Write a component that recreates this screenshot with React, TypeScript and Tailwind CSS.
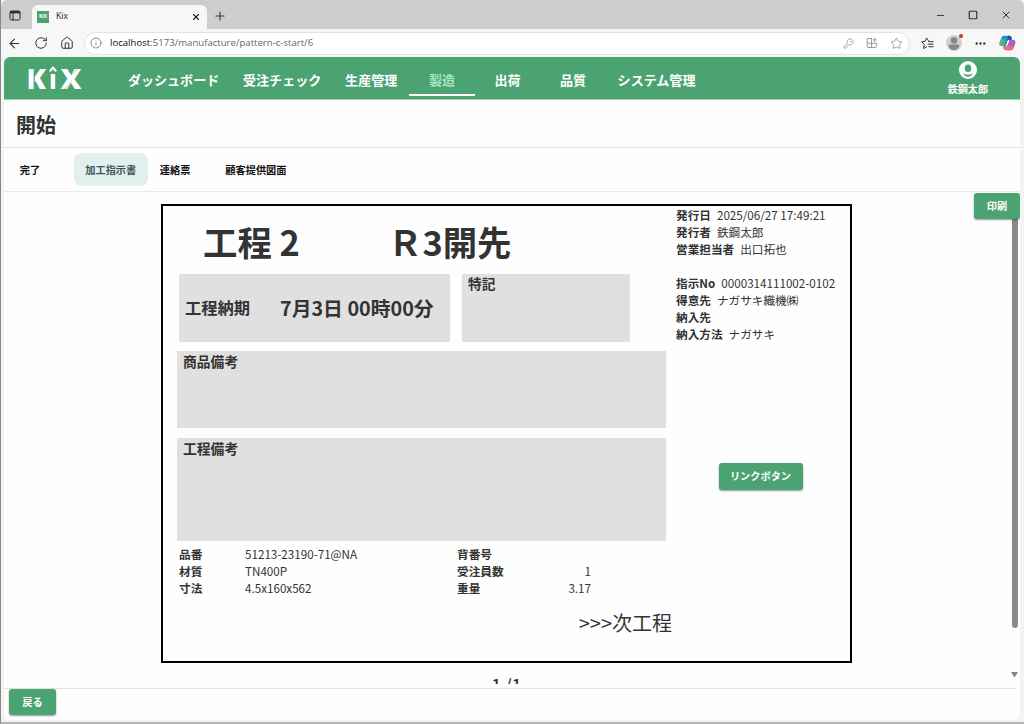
import React from 'react';
import { ArrowLeft, RotateCw, House, Info, KeyRound, Star, X, Plus, Minus, Square, Ellipsis } from 'lucide-react';

interface NavItem {
  label: string;
  active?: boolean;
}

interface Field {
  label: string;
  value: string;
}

const navItems: NavItem[] = [
  { label: 'ダッシュボード' },
  { label: '受注チェック' },
  { label: '生産管理' },
  { label: '製造', active: true },
  { label: '出荷' },
  { label: '品質' },
  { label: 'システム管理' },
];

const subTabs: NavItem[] = [
  { label: '完了' },
  { label: '加工指示書', active: true },
  { label: '連絡票' },
  { label: '顧客提供図面' },
];

const issueFields: Field[] = [
  { label: '発行日', value: '2025/06/27 17:49:21' },
  { label: '発行者', value: '鉄鋼太郎' },
  { label: '営業担当者', value: '出口拓也' },
];

const orderFields: Field[] = [
  { label: '指示No', value: '0000314111002-0102' },
  { label: '得意先', value: 'ナガサキ織機㈱' },
  { label: '納入先', value: '' },
  { label: '納入方法', value: 'ナガサキ' },
];

const partFields: Field[] = [
  { label: '品番', value: '51213-23190-71@NA' },
  { label: '材質', value: 'TN400P' },
  { label: '寸法', value: '4.5x160x562' },
];

const quantityFields: Field[] = [
  { label: '背番号', value: '' },
  { label: '受注員数', value: '1' },
  { label: '重量', value: '3.17' },
];

// Stylised word mark: a split K and X around an arrow-topped i.
const Logo = () => (
  <svg width="58" height="40" viewBox="-2 -8 58 40" aria-label="KiX" className="shrink-0">
    <g fill="#fff" fontFamily="Open Sans" fontWeight="800" fontSize="28">
      <text x="-1.4" y="23" textLength="19.5" lengthAdjust="spacingAndGlyphs">K</text>
      <text x="32.5" y="23" textLength="21" lengthAdjust="spacingAndGlyphs">X</text>
    </g>
    <rect x="22.8" y="8" width="4.4" height="15" fill="#fff" />
    <path d="M21.8 5.4 25 1.6l3.200 3.800" fill="none" stroke="#fff" strokeWidth="2.2" />
    <path d="M6.2 1v22" stroke="#4ca372" strokeWidth="1.2" />
    <path d="M43 9 52 1M36 24l7.500-9" stroke="#4ca372" strokeWidth=".5" />
  </svg>
);

const FavoritesIcon = () => (
  <svg width="13" height="13" viewBox="0 0 13 13" fill="none" stroke="#333" strokeWidth="1" strokeLinejoin="round" strokeLinecap="round">
    <path d="M7.8 4.2 5.6 1 4 4.3.8 4.8l2.4 2.5-.6 4.2 3-1.7M7.8 4.7h4.4M7 7.2h5.2M7.8 9.7h4.4" />
  </svg>
);

const AppsIcon = () => (
  <svg width="12" height="12" viewBox="0 0 12 12" fill="none" stroke="#999" strokeWidth="1">
    <path d="M5.5 1.5H2a.8.8 0 0 0-.8.8v7.4c0 .5.3.8.8.8h7.5c.5 0 .8-.3.8-.8V6.2H1.2M5.6 1.5v9M8.7.8v4M6.7 2.8h4" />
  </svg>
);

const CopilotIcon = () => (
  <svg width="17" height="16" viewBox="0 0 17 16">
    <path d="M5 .8h5.2c1.2 0 1.8.7 2.2 1.9l.6 2H9.2L6.8 11H2.7C.7 11 .2 9.3.7 7.5L2.4 2.9C2.9 1.4 3.7.8 5 .8Z" fill="#2492d1" />
    <path d="M.7 7.5 1.8 4.5h4.800L5 11H2.700C.7 11 .2 9.3.7 7.5Z" fill="#57b86b" />
    <path d="M9 .8h1.500c1.100 0 1.700.7 2 1.900l.5 2H8Z" fill="#1b4fa8" />
    <path d="M12 15.200H6.800c-1.200 0-1.800-.7-2.200-1.900l-.6-2h3.800L10.200 5h4.100c2 0 2.500 1.700 2 3.500l-1.700 4.600c-.5 1.500-1.300 2.100-2.600 2.100Z" fill="#b756cf" />
    <path d="M13 15.200H6.800c-1.200 0-1.800-.7-2.200-1.900l-.6-2h11Z" fill="#ee7565" />
    <path d="m7.500 10 1.500-4.500h1.200L8.800 10Z" fill="#fff" />
  </svg>
);

const BrowserBar = () => (
  <div className="shrink-0 bg-[#f7f7f7] font-['Open_Sans',sans-serif]">
    <div className="flex h-[29px] items-end rounded-t-md bg-[#cdcdcd]">
      <div className="flex h-[27px] w-[31px] items-center justify-center pr-1">
        <svg width="12" height="11" viewBox="0 0 12 11" fill="none" stroke="#222">
          <rect x="1" y="1" width="10" height="9" rx="1.5" />
          <path d="M1 2.3h10" strokeWidth="2" />
          <path d="M4 3v7" />
        </svg>
      </div>
      <div className="flex h-6 w-[175px] items-center rounded-t-md bg-[#f7f7f7] pr-[6px] pb-px pl-[5px]">
        <span className="flex h-3 w-3 items-center justify-center bg-[#4ca372] text-[5px] font-bold text-white">KiX</span>
        <span className="ml-[7px] flex-1 text-[8.7px] text-[#222]">Kix</span>
        <X size={10} strokeWidth={2.8} color="#222" />
      </div>
      <div className="ml-[6px] flex h-[26px] items-center">
        <Plus size={14} strokeWidth={1.8} color="#333" />
      </div>
      <div className="mr-[12px] ml-auto flex h-7 items-center gap-[22px] text-[#333]">
        <Minus size={11} strokeWidth={2} />
        <Square size={10} strokeWidth={2.8} />
        <X size={12} strokeWidth={2} />
      </div>
    </div>
    <div className="flex h-7 items-center pr-2 pl-[6px] text-[#333]">
      <ArrowLeft size={15} strokeWidth={1.7} />
      <RotateCw size={14} strokeWidth={1.7} className="ml-[12px]" />
      <House size={14} strokeWidth={1.7} className="ml-[12px]" />
      <div className="ml-[10px] flex h-[23px] w-[826px] items-center rounded-full border border-[#e2e2e2] bg-white pr-[6px] pl-[5px]">
        <Info size={12} strokeWidth={1.7} color="#777" />
        <span className="ml-2 flex-1 text-[9.6px] text-[#666]"><span className="text-[#111]">localhost</span>:5173/manufacture/pattern-c-start/6</span>
        <div className="flex items-center gap-3 text-[#999]">
          <KeyRound size={11} strokeWidth={1.9} />
          <AppsIcon />
          <Star size={13} strokeWidth={1.7} />
        </div>
      </div>
      <div className="ml-[11px] flex flex-1 items-center justify-between">
        <FavoritesIcon />
        <span className="relative h-4 w-4">
          <svg width="16" height="16" viewBox="0 0 16 16">
            <circle cx="8" cy="8" r="8" fill="#d0d0d0" />
            <circle cx="8" cy="5.5" r="3.2" fill="#858585" />
            <path d="M2.7 11c0-1 .6-1.5 1.5-1.5h7.6c.9 0 1.5.5 1.5 1.5-.7 2.5-2.6 4-5.3 4s-4.6-1.5-5.3-4Z" fill="#858585" />
          </svg>
          <span className="absolute -top-px -right-px h-1 w-1 rounded-full bg-[#d92c20]" />
        </span>
        <Ellipsis size={13} strokeWidth={2.4} />
        <CopilotIcon />
      </div>
    </div>
  </div>
);

const Header = () => (
  <header className="flex h-[43px] shrink-0 items-center rounded-t-md border-b border-[#a5d0b8] bg-[#4ca372] pl-[22px] text-white">
    <Logo />
    <nav className="ml-[32px] flex h-full flex-1 items-start">
      {navItems.map(item => (
        <a
          key={item.label}
          className={`flex h-[39px] min-w-[65.5px] items-center justify-center border-b-2 px-[11.9px] pt-2 text-[13.05px] leading-none font-bold whitespace-nowrap ${
            item.active ? 'border-white text-[#a5e6c1]' : 'border-transparent'
          }`}
        >
          {item.label}
        </a>
      ))}
    </nav>
    <div className="mr-8 flex flex-col items-center">
      <svg width="18" height="18" viewBox="0 0 18 18">
        <circle cx="9" cy="9" r="9" fill="#fff" />
        <rect x="5.8" y="3.5" width="6.4" height="7.5" rx="3.2" fill="#4ca372" />
        <path d="M4 12c1.2 1 3 1.700 5 1.700s3.800-.7 5-1.700c-.8 2.200-2.700 3.700-5 3.700S4.800 14.200 4 12Z" fill="#4ca372" />
      </svg>
      <span className="mt-[3px] text-[10.1px] leading-[14px] font-bold">鉄鋼太郎</span>
    </div>
  </header>
);

const Button = ({ className = '', children }: { className?: string; children: React.ReactNode }) => (
  <button className={`flex items-center justify-center rounded-[3px] bg-[#4ca372] text-[10.2px] leading-none font-bold text-white shadow-[0_1px_2px_rgba(0,0,0,0.4)] ${className}`}>
    {children}
  </button>
);

const InfoRow = ({ label, value }: Field) => (
  <div className="flex gap-[6px] whitespace-nowrap">
    <span className="font-bold">{label}</span>
    <span>{value}</span>
  </div>
);

const WorkSheet = () => (
  <section className="flex h-[459px] w-[691px] border-2 border-black text-[11.65px] leading-[17px]">
    <div className="flex w-[513px] flex-col pl-[14px]">
      <div className="flex h-[68px] items-center pt-[3px] pl-[26px] text-[34.4px] leading-none font-bold whitespace-pre">
        <span className="w-[185px]">工程 2</span>
        <span>Ｒ3開先</span>
      </div>
      <div className="ml-[2px] flex h-[68px] gap-3">
        <div className="flex w-[271px] items-center bg-[#e0e0e0] pb-px pl-[6px] font-bold">
          <span className="w-[95px] text-[16.3px]">工程納期</span>
          <span className="text-[19.8px] whitespace-nowrap">7月3日 00時00分</span>
        </div>
        <div className="w-[168px] bg-[#e0e0e0] px-[6px] pt-px text-[13.7px] font-bold">特記</div>
      </div>
      <div className="mt-[9px] h-[77px] w-[489px] bg-[#e0e0e0] px-[6px] pt-[2px] text-[13.8px] font-bold">商品備考</div>
      <div className="mt-[10px] h-[103px] w-[489px] bg-[#e0e0e0] px-[6px] pt-[2px] text-[13.8px] font-bold">工程備考</div>
      <div className="mt-[4px] flex pl-[2px]">
        <div className="w-[278px]">
          {partFields.map(f => (
            <div key={f.label} className="flex h-[17px]">
              <span className="w-[66px] font-bold">{f.label}</span>
              <span>{f.value}</span>
            </div>
          ))}
        </div>
        <div className="w-[134px]">
          {quantityFields.map(f => (
            <div key={f.label} className="flex h-[17px] justify-between">
              <span className="font-bold">{f.label}</span>
              <span>{f.value}</span>
            </div>
          ))}
        </div>
      </div>
      <div className="mt-[12px] self-end pr-1 text-[20px] leading-[30px]">&gt;&gt;&gt;次工程</div>
    </div>
    <div className="flex flex-1 flex-col">
      {issueFields.map(f => <InfoRow key={f.label} {...f} />)}
      <div className="h-[17px]" />
      {orderFields.map(f => <InfoRow key={f.label} {...f} />)}
      <Button className="mt-[121px] ml-[42.5px] h-[27px] w-[84px]">リンクボタン</Button>
    </div>
  </section>
);

export default function App() {
  return (
    <div className="flex h-[724px] w-[1024px] flex-col overflow-hidden border-b-2 border-l border-b-[#b4b4b4] border-l-[#8a8a8a] bg-[#f3f3f3] font-['Noto_Sans_CJK_JP',sans-serif] text-[#333]">
      <BrowserBar />
      <div className="mr-1 mb-[2px] ml-[3px] flex min-h-0 flex-1 flex-col rounded-b-md bg-[#fefefe]">
        <Header />
        <h1 className="flex h-12 shrink-0 items-center border-b border-[#e2e2e2] pt-[2px] pl-3 text-[20px] leading-none font-bold">開始</h1>
        <div className="flex h-11 shrink-0 items-center border-b border-[#eaeaea] pl-1">
          {subTabs.map(tab => (
            <button
              key={tab.label}
              className={`flex h-[33px] min-w-[65.5px] items-center rounded-lg px-[11.8px] pt-px text-[10.2px] leading-none font-bold ${
                tab.active ? 'bg-[#e1f0ef] text-[#455]' : 'text-[#111]'
              }`}
            >
              {tab.label}
            </button>
          ))}
        </div>
        <main className="relative flex min-h-0 flex-1 flex-col overflow-hidden pt-3 pl-[157px]">
          <WorkSheet />
          {/* page counter, partly scrolled out of view */}
          <div className="mt-[10px] h-[11px] w-[691px] shrink-0 overflow-hidden text-center text-[17px] leading-[23px] font-medium whitespace-pre">1 /1</div>
          <div className="absolute top-6 right-[2px] h-[412px] w-[6px] rounded-full bg-[#8b8b8b]" />
          <svg width="7" height="6" viewBox="0 0 7 6" className="absolute right-[2px] bottom-[10px]"><path d="M0 0h7L3.5 5.5Z" fill="#858585" /></svg>
          <Button className="absolute top-[1px] right-0 h-[26px] w-[46px]">印刷</Button>
        </main>
        <footer className="mr-1 flex h-8 shrink-0 border-t border-[#e4e4e4] pl-[5px]">
          <Button className="h-[26px] w-[47px] pt-px">戻る</Button>
        </footer>
      </div>
    </div>
  );
}
